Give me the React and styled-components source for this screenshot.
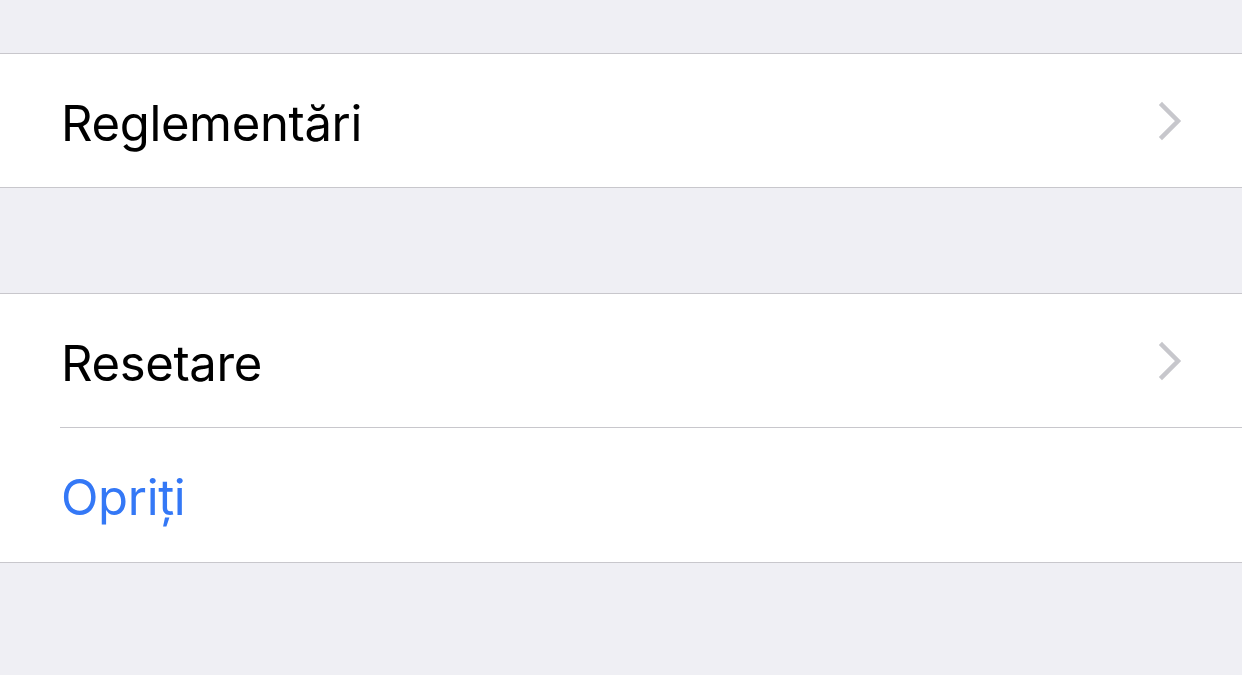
import styled, { createGlobalStyle } from "styled-components";

const Global = createGlobalStyle`
  html, body {
    margin: 0;
    padding: 0;
    background: #efeff4;
    font-family: Inter, "Noto Sans", sans-serif;
  }
`;

function Chevron() {
  return (
    <svg width="28" height="40" viewBox="0 0 28 40">
      <path
        d="M5 4 L21 20 L5 36"
        fill="none"
        stroke="#c7c7cc"
        strokeWidth="4.5"
        strokeLinecap="square"
      />
    </svg>
  );
}

function App() {
  return (
    <Page>
      <Global />
      <Spacer height={53} />
      <Group>
        <Row>
          <Label>Reglementări</Label>
          <Chevron />
        </Row>
      </Group>
      <Spacer height={105} />
      <Group>
        <Row divider>
          <Label>Resetare</Label>
          <Chevron />
        </Row>
        <Row last>
          <Label action>Opriți</Label>
        </Row>
      </Group>
    </Page>
  );
}

export default App;

const Page = styled.div`
  width: 1242px;
  height: 675px;
  background: #efeff4;
  overflow: hidden;
`;

const Spacer = styled.div`
  height: ${(p) => p.height}px;
`;

const Group = styled.div`
  background: #fff;
  border-top: 1px solid #c8c7cc;
  border-bottom: 1px solid #c8c7cc;
`;

const Row = styled.div`
  height: ${(p) => (p.divider || p.last ? 134 : 133)}px;
  margin-left: 60px;
  padding-right: 57px;
  display: flex;
  align-items: center;
  justify-content: space-between;
  box-sizing: border-box;
  border-bottom: ${(p) => (p.divider ? "1px solid #c8c7cc" : "none")};
`;

const Label = styled.span`
  font-size: 49px;
  letter-spacing: -0.35px;
  color: ${(p) => (p.action ? "#3478f6" : "#000")};
  padding-top: 5px;
  margin-left: 1px;
`;
